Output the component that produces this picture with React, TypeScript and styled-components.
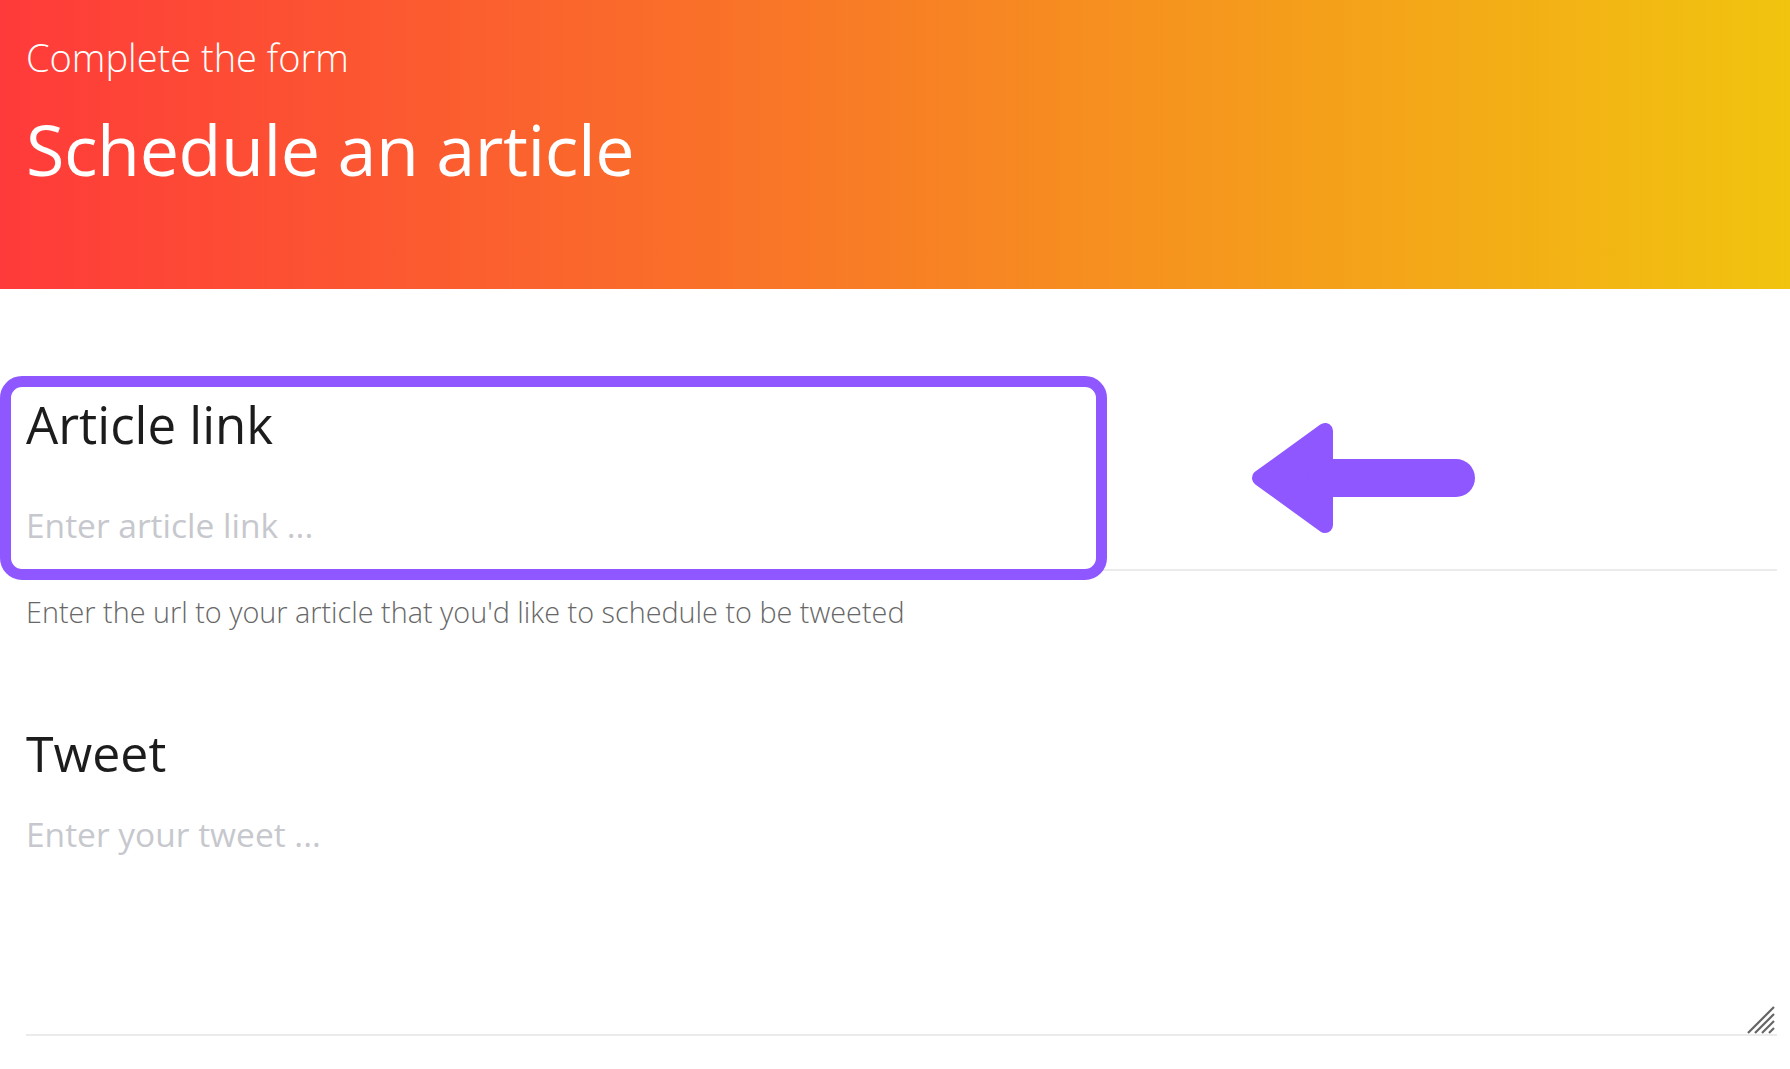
import React from 'react';
import styled, { createGlobalStyle } from 'styled-components';

const GlobalStyle = createGlobalStyle`
    html, body {
        margin: 0;
        padding: 0;
        background: #ffffff;
        font-family: 'Open Sans', 'Noto Sans', Arial, sans-serif;
    }
    * {
        box-sizing: border-box;
    }
`;

const StyledHeader = styled.header`
    height: 289px;
    padding: 34px 26px 0;
    background: linear-gradient(90deg, #ff3a3a 0%, #f1c40f 100%);
    color: #ffffff;
`;

const StyledSubtitle = styled.p`
    margin: 0;
    font-size: 38px;
    font-weight: 300;
    line-height: 46px;
`;

const StyledTitle = styled.h1`
    margin: 26px 0 0;
    font-size: 70px;
    font-weight: 400;
    line-height: 86px;
    letter-spacing: -0.4px;
`;

const StyledForm = styled.form`
    padding: 105px 13px 40px 26px;
`;

const StyledField = styled.div<{ $gap?: number }>`
    position: relative;
    display: flex;
    flex-direction: column;
    margin-top: ${(p) => p.$gap ?? 0}px;
`;

const StyledLabel = styled.label<{ $size?: number }>`
    font-size: ${(p) => p.$size ?? 50}px;
    font-weight: 400;
    line-height: 60px;
    color: #1c1c1c;
`;

const fieldText = `
    font-family: 'Open Sans', 'Noto Sans', Arial, sans-serif;
    font-size: 33.5px;
    line-height: 46px;
    color: #1c1c1c;
    border: none;
    border-bottom: 2px solid #ebebeb;
    background: transparent;
    outline: none;
    padding: 0;
    &::placeholder {
        color: #c6c8cd;
    }
`;

const StyledInput = styled.input`
    ${fieldText}
    margin-top: 48px;
    height: 69px;
    padding-bottom: 21px;
`;

const StyledHint = styled.p`
    margin: 22px 0 0;
    font-size: 28.8px;
    font-weight: 300;
    line-height: 38px;
    color: #676767;
`;

const StyledAreaWrap = styled.div`
    position: relative;
    margin-top: 28px;
`;

const StyledTextArea = styled.textarea`
    ${fieldText}
    display: block;
    width: 100%;
    height: 225px;
    resize: none;
`;

// frame + arrow are the purple annotation drawn over the first field
const StyledHighlight = styled.div`
    position: absolute;
    left: -26px;
    top: -18px;
    width: 1107px;
    height: 204px;
    border: 11px solid #8f57ff;
    border-radius: 22px;
    pointer-events: none;
`;

const StyledArrow = styled.svg`
    position: absolute;
    left: 1219px;
    top: 21px;
`;

const StyledGrip = styled.svg`
    position: absolute;
    right: 2px;
    bottom: 2px;
    pointer-events: none;
`;

const PURPLE = '#8f57ff';

const App = () => {
    return (
        <>
            <GlobalStyle />
            <StyledHeader>
                <StyledSubtitle>Complete the form</StyledSubtitle>
                <StyledTitle>Schedule an article</StyledTitle>
            </StyledHeader>

            <StyledForm onSubmit={(e) => e.preventDefault()}>
                <StyledField>
                    <StyledLabel htmlFor="article-link" $size={51}>
                        Article link
                    </StyledLabel>
                    <StyledInput id="article-link" type="text" placeholder="Enter article link ..." />
                    <StyledHighlight />
                    <StyledArrow width="240" height="125" viewBox="0 0 240 125">
                        <polygon
                            points="15,63 80,16 80,110"
                            fill={PURPLE}
                            stroke={PURPLE}
                            strokeWidth="16"
                            strokeLinejoin="round"
                        />
                        <line x1="82" y1="63" x2="211" y2="63" stroke={PURPLE} strokeWidth="38" strokeLinecap="round" />
                    </StyledArrow>
                </StyledField>
                <StyledHint>Enter the url to your article that you'd like to schedule to be tweeted</StyledHint>

                <StyledField $gap={92}>
                    <StyledLabel htmlFor="tweet">Tweet</StyledLabel>
                    <StyledAreaWrap>
                        <StyledTextArea id="tweet" placeholder="Enter your tweet ..." />
                        <StyledGrip width="28" height="28" viewBox="0 0 28 28">
                            <g stroke="#666666" strokeWidth="2.2">
                                <line x1="1" y1="27" x2="27" y2="1" />
                                <line x1="8" y1="27" x2="27" y2="8" />
                                <line x1="15" y1="27" x2="27" y2="15" />
                                <line x1="22" y1="27" x2="27" y2="22" />
                            </g>
                        </StyledGrip>
                    </StyledAreaWrap>
                </StyledField>
            </StyledForm>
        </>
    );
};

export default App;
